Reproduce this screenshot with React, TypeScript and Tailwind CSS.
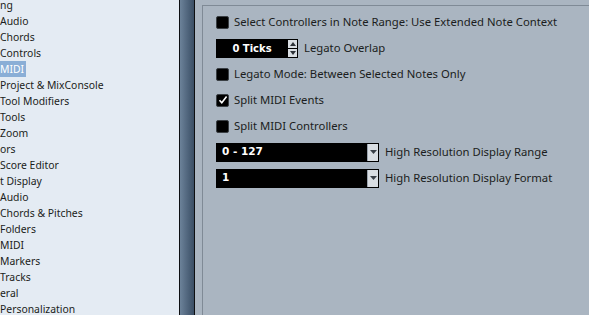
import React from "react";

const treeItems = [
  { label: "ng" },
  { label: "Audio" },
  { label: "Chords" },
  { label: "Controls" },
  { label: "MIDI", selected: true },
  { label: "Project & MixConsole" },
  { label: "Tool Modifiers" },
  { label: "Tools" },
  { label: "Zoom" },
  { label: "ors" },
  { label: "Score Editor" },
  { label: "t Display" },
  { label: "Audio" },
  { label: "Chords & Pitches" },
  { label: "Folders" },
  { label: "MIDI" },
  { label: "Markers" },
  { label: "Tracks" },
  { label: "eral" },
  { label: "Personalization" },
];

function Checkbox({ checked }: { checked?: boolean }) {
  return (
    <div className="flex h-[13px] w-[13px] shrink-0 items-center justify-center rounded-[2px] border border-[#3a3f44] bg-black">
      {checked ? (
        <svg width="10" height="10" viewBox="0 0 10 10">
          <path d="M1.5 5.2 L3.8 7.8 L8.6 1.6" fill="none" stroke="white" strokeWidth="1.6" />
        </svg>
      ) : null}
    </div>
  );
}

function Row({ children }: { children: React.ReactNode }) {
  return <div className="flex h-[26px] items-center gap-[5px]">{children}</div>;
}

function Dropdown({ value }: { value: string }) {
  return (
    <div className="mr-[1px] flex h-[19px] w-[163px] shrink-0 items-stretch bg-black">
      <div className="flex flex-1 items-center pl-[6px] text-[10.5px] font-bold text-white [font-family:Tahoma,'DejaVu_Sans',sans-serif]">
        {value}
      </div>
      <div className="m-[1px] flex w-[11px] items-center justify-center border-l border-[#9aa3ad] bg-[#d9dee3]">
        <svg width="7" height="4" viewBox="0 0 7 4">
          <path d="M0 0 L7 0 L3.5 4 Z" fill="#3a4048" />
        </svg>
      </div>
    </div>
  );
}

export default function App() {
  return (
    <div className="flex h-[315px] w-[589px] overflow-hidden text-[#1b1d20] [font-family:'Noto_Sans',sans-serif]">
      <div className="w-[179px] shrink-0 overflow-hidden bg-[#e4ebf3] text-[10.4px]">
        <ul className="mt-[-3px]">
          {treeItems.map((item, i) => (
            <li key={i} className="flex h-[16px] items-center">
              <span
                className={
                  item.selected
                    ? "bg-[#8aaed6] pr-[2px] leading-[16px] text-white"
                    : "leading-[16px]"
                }
              >
                {item.label}
              </span>
            </li>
          ))}
        </ul>
      </div>
      <div className="w-[1px] shrink-0 bg-[#0d0f12]" />
      <div className="w-[14px] shrink-0 bg-gradient-to-r from-[#6c8299] to-[#3a4e65]" />
      <div className="w-[1px] shrink-0 bg-[#0d0f12]" />
      <div className="flex-1 bg-[#aab5c1] pl-[7px] pt-[5px] text-[11.3px]">
        <div className="h-full border-l border-t border-[#7f8a96] pl-[13px] pt-[3px]">
          <Row>
            <Checkbox />
            <span>Select Controllers in Note Range: Use Extended Note Context</span>
          </Row>
          <Row>
            <div className="mr-[1px] flex h-[19px] items-stretch bg-black">
              <div className="flex w-[72px] items-center justify-center text-[10px] font-bold text-white [font-family:Tahoma,'DejaVu_Sans',sans-serif]">
                0 Ticks
              </div>
              <div className="flex w-[10px] flex-col gap-[1px] p-[1px] pl-0">
                <div className="flex flex-1 items-center justify-center bg-[#d9dee3]">
                  <svg width="6" height="4" viewBox="0 0 6 4">
                    <path d="M0 4 L6 4 L3 0 Z" fill="#2d3238" />
                  </svg>
                </div>
                <div className="flex flex-1 items-center justify-center bg-[#d9dee3]">
                  <svg width="6" height="4" viewBox="0 0 6 4">
                    <path d="M0 0 L6 0 L3 4 Z" fill="#2d3238" />
                  </svg>
                </div>
              </div>
            </div>
            <span>Legato Overlap</span>
          </Row>
          <Row>
            <Checkbox />
            <span>Legato Mode: Between Selected Notes Only</span>
          </Row>
          <Row>
            <Checkbox checked />
            <span>Split MIDI Events</span>
          </Row>
          <Row>
            <Checkbox />
            <span>Split MIDI Controllers</span>
          </Row>
          <Row>
            <Dropdown value="0 - 127" />
            <span>High Resolution Display Range</span>
          </Row>
          <Row>
            <Dropdown value="1" />
            <span>High Resolution Display Format</span>
          </Row>
        </div>
      </div>
    </div>
  );
}
